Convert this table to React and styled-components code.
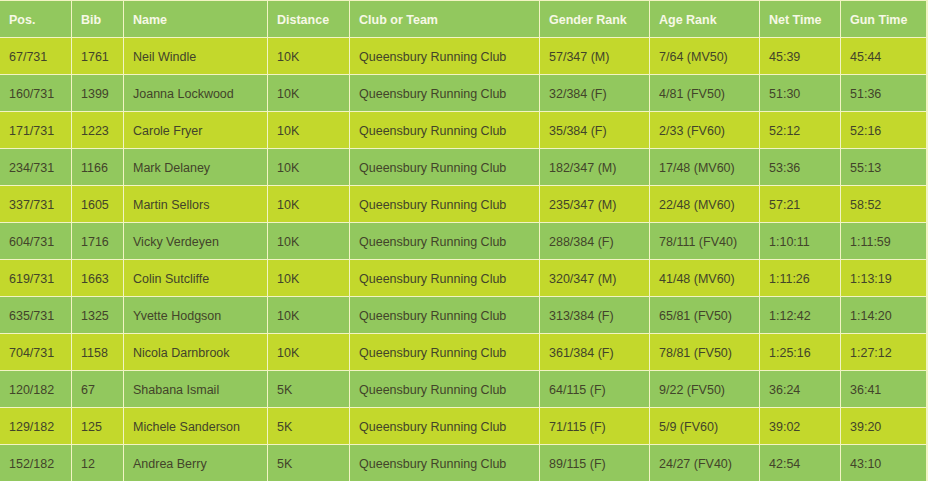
import styled, { createGlobalStyle } from 'styled-components';

const GlobalStyle = createGlobalStyle`
  html, body {
    margin: 0;
    padding: 0;
    background: #ffffff;
    overflow: hidden;
  }
`;

const Wrapper = styled.div`
  width: 928px;
  height: 481px;
  overflow: hidden;
  background: #f2f4c4;
`;

const Table = styled.table`
  border-collapse: collapse;
  table-layout: fixed;
  width: 927px;
  margin-left: -1px;
  font-family: "Liberation Sans", Arial, sans-serif;
  font-size: 12.5px;
`;

const HeadCell = styled.th`
  height: 35px;
  padding: 1px 9px 0;
  text-align: left;
  vertical-align: middle;
  font-weight: bold;
  color: #f7f8e6;
  background: #92c85e;
  border: 1px solid #f2f4c4;
  white-space: nowrap;
`;

const Row = styled.tr`
  background: ${(p) => (p.$alt ? '#92c85e' : '#c3d82c')};
`;

const Cell = styled.td`
  height: 34px;
  padding: 2px 9px 0;
  vertical-align: middle;
  color: #42442a;
  border: 1px solid #f2f4c4;
  white-space: nowrap;
  overflow: hidden;
`;

const columns = [
  { label: 'Pos.', width: 72 },
  { label: 'Bib', width: 52 },
  { label: 'Name', width: 144 },
  { label: 'Distance', width: 82 },
  { label: 'Club or Team', width: 190 },
  { label: 'Gender Rank', width: 110 },
  { label: 'Age Rank', width: 110 },
  { label: 'Net Time', width: 81 },
  { label: 'Gun Time', width: 86 },
];

const results = [
  ['67/731', '1761', 'Neil Windle', '10K', '57/347 (M)', '7/64 (MV50)', '45:39', '45:44'],
  ['160/731', '1399', 'Joanna Lockwood', '10K', '32/384 (F)', '4/81 (FV50)', '51:30', '51:36'],
  ['171/731', '1223', 'Carole Fryer', '10K', '35/384 (F)', '2/33 (FV60)', '52:12', '52:16'],
  ['234/731', '1166', 'Mark Delaney', '10K', '182/347 (M)', '17/48 (MV60)', '53:36', '55:13'],
  ['337/731', '1605', 'Martin Sellors', '10K', '235/347 (M)', '22/48 (MV60)', '57:21', '58:52'],
  ['604/731', '1716', 'Vicky Verdeyen', '10K', '288/384 (F)', '78/111 (FV40)', '1:10:11', '1:11:59'],
  ['619/731', '1663', 'Colin Sutcliffe', '10K', '320/347 (M)', '41/48 (MV60)', '1:11:26', '1:13:19'],
  ['635/731', '1325', 'Yvette Hodgson', '10K', '313/384 (F)', '65/81 (FV50)', '1:12:42', '1:14:20'],
  ['704/731', '1158', 'Nicola Darnbrook', '10K', '361/384 (F)', '78/81 (FV50)', '1:25:16', '1:27:12'],
  ['120/182', '67', 'Shabana Ismail', '5K', '64/115 (F)', '9/22 (FV50)', '36:24', '36:41'],
  ['129/182', '125', 'Michele Sanderson', '5K', '71/115 (F)', '5/9 (FV60)', '39:02', '39:20'],
  ['152/182', '12', 'Andrea Berry', '5K', '89/115 (F)', '24/27 (FV40)', '42:54', '43:10'],
];

export default function App() {
  return (
    <Wrapper>
      <GlobalStyle />
      <Table>
        <colgroup>
          {columns.map((c) => (
            <col key={c.label} style={{ width: c.width }} />
          ))}
        </colgroup>
        <thead>
          <tr>
            {columns.map((c) => (
              <HeadCell key={c.label}>{c.label}</HeadCell>
            ))}
          </tr>
        </thead>
        <tbody>
          {results.map((r, i) => (
            <Row key={r[0]} $alt={i % 2 === 1}>
              <Cell>{r[0]}</Cell>
              <Cell>{r[1]}</Cell>
              <Cell>{r[2]}</Cell>
              <Cell>{r[3]}</Cell>
              <Cell>Queensbury Running Club</Cell>
              <Cell>{r[4]}</Cell>
              <Cell>{r[5]}</Cell>
              <Cell>{r[6]}</Cell>
              <Cell>{r[7]}</Cell>
            </Row>
          ))}
        </tbody>
      </Table>
    </Wrapper>
  );
}
